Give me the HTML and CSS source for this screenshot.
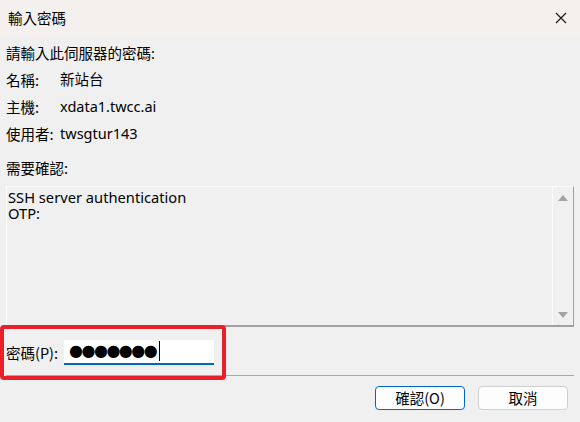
FILE: index.html
```html
<!DOCTYPE html>
<html lang="zh-Hant">
<head>
<meta charset="utf-8">
<title>輸入密碼</title>
<link rel="stylesheet" href="styles.css">
</head>
<body>
<div class="window">
  <div class="titlebar">
    <span class="title">輸入密碼</span>
    <svg class="close" width="12" height="12" viewBox="0 0 12 12"><path d="M1 1 L11 11 M11 1 L1 11" stroke="#1a1a1a" stroke-width="1.2" fill="none"/></svg>
  </div>
  <div class="content">
    <div class="line first">請輸入此伺服器的密碼:</div>
    <div class="line row"><span class="key">名稱:</span><span>新站台</span></div>
    <div class="line row"><span class="key">主機:</span><span>xdata1.twcc.ai</span></div>
    <div class="line row"><span class="key">使用者:</span><span>twsgtur143</span></div>
    <div class="line section">需要確認:</div>
    <div class="memo">
      <div class="memo-text"><div>SSH server authentication</div><div>OTP:</div></div>
      <div class="scroll">
        <span class="arrow up"></span>
        <span class="arrow down"></span>
      </div>
    </div>
    <div class="pwrow">
      <span class="pwlabel">密碼(P):</span>
      <div class="pwinput"><span class="dots">●●●●●●●</span><span class="caret"></span></div>
      <div class="highlight"></div>
    </div>
    <div class="sep"></div>
    <div class="buttons">
      <button class="btn primary">確認(O)</button>
      <button class="btn">取消</button>
    </div>
  </div>
</div>
</body>
</html>
```
FILE: styles.css
```css
html, body {
  margin: 0;
  padding: 0;
  background: #f0f0f0;
}
.window {
  width: 580px;
  height: 422px;
  box-sizing: border-box;
  background: #f0f0f0;
  font-family: "Segoe UI", "Noto Sans", "Noto Sans CJK TC", sans-serif;
  font-size: 14.5px;
  color: #000;
  overflow: hidden;
  border-radius: 0 0 8px 8px;
}
.titlebar {
  height: 36px;
  background: #f3f0ee;
  display: flex;
  align-items: center;
  justify-content: space-between;
  padding: 0 13px 0 8px;
}
.title {
  font-family: "Noto Sans CJK TC", sans-serif;
  font-size: 14.5px;
  margin-top: -2px;
}
.close { display: block; }
.content {
  padding: 4px 6px 0 6px;
  display: flex;
  flex-direction: column;
}
.line {
  height: 27px;
  line-height: 27px;
  font-family: "Noto Sans", "Noto Sans CJK TC", sans-serif;
  white-space: nowrap;
}
.first { height: 26px; line-height: 26px; }
.row { display: flex; }
.key { width: 54px; font-family: "Noto Sans CJK TC", sans-serif; }
.section { margin-top: 7px; font-family: "Noto Sans CJK TC", sans-serif; }
.memo {
  margin-top: 5px;
  height: 141px;
  box-sizing: border-box;
  border-top: 1px solid #fbfbfb;
  border-left: 1px solid #fbfbfb;
  border-right: 1px solid #a0a0a0;
  border-bottom: 2px solid #a0a0a0;
  display: flex;
}
.memo-text {
  flex: 1;
  padding: 2px 0 0 1px;
  line-height: 16px;
  font-family: "Noto Sans", sans-serif;
  font-size: 14.7px;
}
.memo-text div { height: 16px; }
.scroll {
  width: 20px;
  border-left: 1px solid #fbfbfb;
  display: flex;
  flex-direction: column;
  justify-content: space-between;
  align-items: center;
  padding: 8px 0 7px;
}
.arrow {
  width: 0;
  height: 0;
  border-left: 5px solid transparent;
  border-right: 5px solid transparent;
}
.up { border-bottom: 6px solid #a3a3a3; }
.down { border-top: 6px solid #a3a3a3; }
.pwrow {
  position: relative;
  height: 48px;
  display: flex;
  align-items: center;
}
.pwlabel {
  width: 58px;
  font-family: "Noto Sans CJK TC", sans-serif;
  font-size: 14.5px;
  margin-top: 2px;
}
.pwinput {
  width: 150px;
  height: 25px;
  box-sizing: border-box;
  background: #fff;
  border-bottom: 2px solid #0067c0;
  display: flex;
  align-items: center;
  padding-left: 5px;
  margin-top: 2px;
}
.dots {
  font-family: "DejaVu Sans", sans-serif;
  font-size: 16px;
  letter-spacing: -1.5px;
  line-height: 1;
}
.caret {
  width: 1px;
  height: 20px;
  background: #000;
  margin-left: 3px;
}
.highlight {
  position: absolute;
  left: -6px;
  top: -2px;
  width: 218px;
  height: 47px;
  border: 4px solid #e8202a;
  border-radius: 4px;
}
.sep {
  height: 1px;
  background: #a7a7a7;
}
.buttons {
  display: flex;
  justify-content: flex-end;
  gap: 13px;
  padding: 10px 6px 0 0;
}
.btn {
  width: 90px;
  height: 24px;
  box-sizing: border-box;
  background: #fdfdfd;
  border: 1px solid #d0d0d0;
  border-radius: 4px;
  font-family: "Noto Sans CJK TC", sans-serif;
  font-size: 14.5px;
  padding: 0;
  line-height: 20px;
  color: #000;
}
.primary { border-color: #0067c0; }
```
